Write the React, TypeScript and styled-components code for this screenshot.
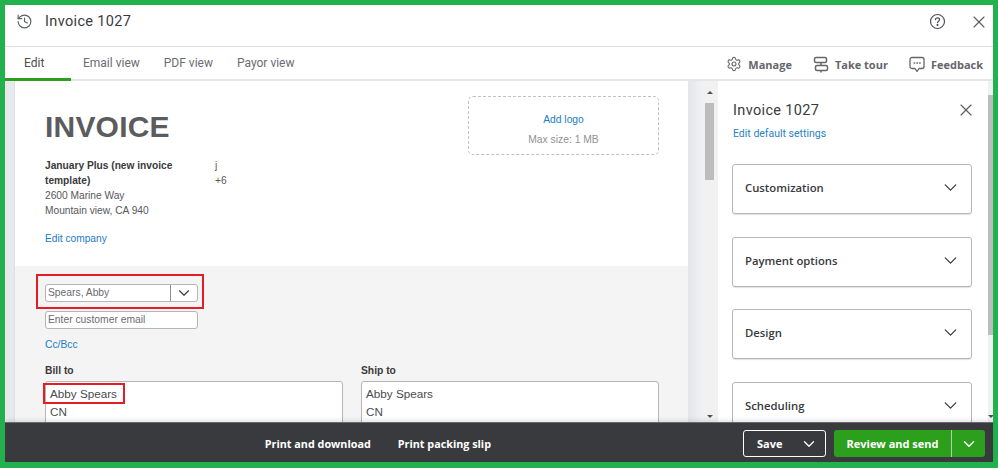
import React, { FC } from "react";
import styled, { createGlobalStyle } from "styled-components";
import { ChevronDown, Settings, X, History } from "lucide-react";

const GlobalStyle = createGlobalStyle`
  html, body {
    margin: 0;
    padding: 0;
    height: 100%;
    background: #22b14c;
    font-family: "Liberation Sans", Arial, sans-serif;
  }
  * { box-sizing: border-box; }
`;

const TABS = ["Edit", "Email view", "PDF view", "Payor view"];
const SECTIONS = ["Customization", "Payment options", "Design", "Scheduling"];

const HelpIcon: FC = () => (
  <svg width="17" height="17" viewBox="0 0 17 17" fill="none" stroke="#4f5155" strokeWidth="1.2">
    <circle cx="8.5" cy="8.5" r="7" />
    <path d="M6.4 6.7c0-1.2 1-1.9 2.1-1.9s2.1.7 2.1 1.8c0 1.6-2.1 1.6-2.1 3.1" strokeLinecap="round" />
    <circle cx="8.5" cy="12" r="0.5" fill="#4f5155" />
  </svg>
);

const TourIcon: FC = () => (
  <svg width="16" height="17" viewBox="0 0 16 17" fill="none" stroke="currentColor" strokeWidth="1.5">
    <rect x="1.5" y="1.5" width="12" height="5" rx="1.5" />
    <rect x="2.5" y="9.5" width="12" height="5" rx="1.5" />
    <path d="M8 6.5v3M8 14.5v2" />
  </svg>
);

const FeedbackIcon: FC = () => (
  <svg width="16" height="17" viewBox="0 0 16 17" fill="none" stroke="currentColor" strokeWidth="1.3">
    <path d="M3 1.5h10a2 2 0 0 1 2 2v7a2 2 0 0 1-2 2h-3l-2 3-2-3H3a2 2 0 0 1-2-2v-7a2 2 0 0 1 2-2z" strokeLinejoin="round" />
    <path d="M5 7h.6M7.8 7h.6M10.6 7h.6" strokeLinecap="round" strokeWidth="1.4" />
  </svg>
);

const App: FC = () => {
  return (
    <Frame>
      <GlobalStyle />
      <Window>
        <Header>
          <HeaderLeft>
            <History size={17} strokeWidth={1.6} color="#5d5f63" />
            <HeaderTitle>Invoice 1027</HeaderTitle>
          </HeaderLeft>
          <HeaderRight>
            <HelpIcon />
            <X size={20} strokeWidth={1.4} color="#5d5f63" />
          </HeaderRight>
        </Header>
        <TabBar>
          <Tabs>
            {TABS.map((t, i) => (
              <Tab key={t} $active={i === 0}>
                {t}
              </Tab>
            ))}
          </Tabs>
          <Tools>
            <Tool>
              <Settings size={16} strokeWidth={1.6} />
              Manage
            </Tool>
            <Tool>
              <TourIcon />
              Take tour
            </Tool>
            <Tool>
              <FeedbackIcon />
              Feedback
            </Tool>
          </Tools>
        </TabBar>
        <Body>
          <Gutter />
          <Paper>
            <CompanyBlock>
              <CompanyLeft>
                <InvoiceTitle>INVOICE</InvoiceTitle>
                <CompanyColumns>
                  <CompanyInfo>
                    <strong>January Plus (new invoice template)</strong>
                    <div>2600 Marine Way</div>
                    <div>Mountain view, CA 940</div>
                  </CompanyInfo>
                  <CompanyContact>
                    <div>j</div>
                    <div>+6</div>
                  </CompanyContact>
                </CompanyColumns>
                <EditCompany>Edit company</EditCompany>
              </CompanyLeft>
              <LogoBox>
                <LogoLink>Add logo</LogoLink>
                <LogoHint>Max size: 1 MB</LogoHint>
              </LogoBox>
            </CompanyBlock>
            <CustomerBlock>
              <CustomerHighlight>
                <CustomerSelect>
                  <CustomerValue>Spears, Abby</CustomerValue>
                  <CustomerArrow>
                    <ChevronDown size={18} strokeWidth={1.5} />
                  </CustomerArrow>
                </CustomerSelect>
              </CustomerHighlight>
              <EmailInput>Enter customer email</EmailInput>
              <CcBcc>Cc/Bcc</CcBcc>
              <Addresses>
                <Address>
                  <AddressLabel>Bill to</AddressLabel>
                  <AddressBox>
                    <NameHighlight>Abby Spears</NameHighlight>
                    <AddressLine>CN</AddressLine>
                  </AddressBox>
                </Address>
                <Address>
                  <AddressLabel>Ship to</AddressLabel>
                  <AddressBox>
                    <AddressLine>Abby Spears</AddressLine>
                    <AddressLine>CN</AddressLine>
                  </AddressBox>
                </Address>
              </Addresses>
            </CustomerBlock>
          </Paper>
          <PaperSide />
          <MainScrollbar>
            <ScrollArrow />
            <MainThumb />
            <ScrollArrow $down />
          </MainScrollbar>
          <Panel>
            <PanelHead>
              <PanelTitle>Invoice 1027</PanelTitle>
              <PanelClose>
                <X size={20} strokeWidth={1.4} color="#5d5f63" />
              </PanelClose>
            </PanelHead>
            <PanelLink>Edit default settings</PanelLink>
            <Sections>
              {SECTIONS.map((s) => (
                <Section key={s}>
                  {s}
                  <ChevronDown size={21} strokeWidth={1.5} color="#393a3d" />
                </Section>
              ))}
            </Sections>
          </Panel>
          <PanelScrollbar>
            <PanelThumb />
            <ScrollArrow $down />
          </PanelScrollbar>
        </Body>
        <Footer>
          <FooterCenter>
            <FooterAction>Print and download</FooterAction>
            <FooterAction>Print packing slip</FooterAction>
          </FooterCenter>
          <FooterButtons>
            <SaveButton>
              Save
              <ChevronDown size={18} strokeWidth={1.7} />
            </SaveButton>
            <SendButton>
              <SendLabel>Review and send</SendLabel>
              <SendArrow>
                <ChevronDown size={18} strokeWidth={2} />
              </SendArrow>
            </SendButton>
          </FooterButtons>
        </Footer>
      </Window>
    </Frame>
  );
};

const Frame = styled.div`
  width: 998px;
  height: 468px;
  padding: 5px 5px 6px 5px;
  background: #22b14c;
`;

const Window = styled.div`
  height: 100%;
  display: flex;
  flex-direction: column;
  background: #fff;
  overflow: hidden;
`;

const Header = styled.div`
  height: 42px;
  flex: none;
  display: flex;
  align-items: center;
  justify-content: space-between;
  padding: 0 4px 8px 11px;
  border-bottom: 1px solid #dcdde0;
`;

const HeaderLeft = styled.div`
  display: flex;
  align-items: center;
  gap: 12px;
`;

const HeaderTitle = styled.div`
  font-family: Roboto, sans-serif;
  font-size: 14.5px;
  letter-spacing: 0.35px;
  color: #393a3d;
`;

const HeaderRight = styled.div`
  display: flex;
  align-items: center;
  gap: 23px;
`;

const TabBar = styled.div`
  height: 34px;
  flex: none;
  display: flex;
  align-items: stretch;
  justify-content: space-between;
  padding-right: 10px;
  border-bottom: 2px solid #e3e5e8;
`;

const Tabs = styled.div`
  display: flex;
  height: 34px;
`;

const Tab = styled.div<{ $active?: boolean }>`
  font-family: Roboto, sans-serif;
  font-size: 12px;
  display: flex;
  align-items: center;
  color: ${(p) => (p.$active ? "#4a4c50" : "#6b6c72")};
  padding-left: ${(p) => (p.$active ? "19px" : "0")};
  width: ${(p) => (p.$active ? "66px" : "auto")};
  margin-right: ${(p) => (p.$active ? "12px" : "24px")};
  border-bottom: 3px solid ${(p) => (p.$active ? "#2ca01c" : "transparent")};
`;

const Tools = styled.div`
  display: flex;
  align-items: center;
  gap: 21px;
  padding-top: 2px;
`;

const Tool = styled.div`
  display: flex;
  align-items: center;
  gap: 6px;
  font-family: "Open Sans", sans-serif;
  font-size: 11px;
  font-weight: 700;
  color: #64666c;
`;

const Body = styled.div`
  flex: 1;
  min-height: 0;
  display: flex;
  background: #fff;
`;

const Gutter = styled.div`
  width: 10px;
  flex: none;
  background: #e8e9ed;
  border-right: 1px solid #dfe0e4;
`;

const Paper = styled.div`
  width: 673px;
  flex: none;
  display: flex;
  flex-direction: column;
  overflow: hidden;
  background: #fff;
`;

const CompanyBlock = styled.div`
  height: 185px;
  flex: none;
  display: flex;
  justify-content: space-between;
  padding: 15px 29px 0 30px;
`;

const CompanyLeft = styled.div`
  width: 200px;
`;

const InvoiceTitle = styled.div`
  font-size: 30px;
  font-weight: 700;
  letter-spacing: 0.2px;
  color: #5b5c5e;
  line-height: 32px;
  margin-top: 15px;
`;

const CompanyColumns = styled.div`
  display: flex;
  margin-top: 15px;
  font-size: 10.2px;
  line-height: 15px;
  color: #55575b;
`;

const CompanyInfo = styled.div`
  width: 170px;
  flex: none;
  strong {
    display: block;
    width: 140px;
    color: #393a3d;
  }
`;

const CompanyContact = styled.div``;

const EditCompany = styled.div`
  margin-top: 14px;
  font-size: 10.2px;
  line-height: 14px;
  color: #1c7cc4;
`;

const LogoBox = styled.div`
  width: 191px;
  height: 59px;
  border: 1px dashed #bfc0c3;
  border-radius: 5px;
  display: flex;
  flex-direction: column;
  align-items: center;
  justify-content: center;
  gap: 9px;
  padding-top: 8px;
  font-size: 10.3px;
`;

const LogoLink = styled.div`
  color: #1c7cc4;
`;

const LogoHint = styled.div`
  color: #909296;
`;

const CustomerBlock = styled.div`
  flex: 1;
  background: #f4f4f4;
  padding: 8px 29px 0 30px;
  overflow: hidden;
`;

const CustomerHighlight = styled.div`
  width: 168px;
  height: 35px;
  margin-left: -9px;
  padding: 8px 0 0 7px;
  border: 2px solid #e51c23;
`;

const CustomerSelect = styled.div`
  width: 153px;
  height: 18px;
  display: flex;
  background: #fff;
  border: 1px solid #b5b6b9;
  border-radius: 3px;
  font-size: 10.3px;
  color: #6b6c72;
`;

const CustomerValue = styled.div`
  flex: 1;
  padding-left: 2px;
  line-height: 16px;
`;

const CustomerArrow = styled.div`
  width: 27px;
  display: flex;
  align-items: center;
  justify-content: center;
  color: #393a3d;
  border-left: 1px solid #8d9096;
`;

const EmailInput = styled.div`
  width: 153px;
  height: 18px;
  margin-top: 2px;
  padding-left: 2px;
  background: #fff;
  border: 1px solid #b5b6b9;
  border-radius: 3px;
  font-size: 10.3px;
  line-height: 16px;
  color: #6b6c72;
`;

const CcBcc = styled.div`
  margin-top: 9px;
  font-size: 10.3px;
  line-height: 14px;
  color: #1c7cc4;
`;

const Addresses = styled.div`
  display: flex;
  gap: 18px;
  margin-top: 13px;
`;

const Address = styled.div`
  width: 298px;
`;

const AddressLabel = styled.div`
  font-size: 10.3px;
  font-weight: 700;
  line-height: 12px;
  color: #393a3d;
  margin-bottom: 4px;
`;

const AddressBox = styled.div`
  height: 60px;
  background: #fff;
  border: 1px solid #b5b6b9;
  border-radius: 3px;
  padding-top: 3px;
`;

const AddressLine = styled.div`
  padding-left: 4px;
  font-size: 11.7px;
  line-height: 18px;
  color: #4a4c50;
`;

const NameHighlight = styled.div`
  width: 82px;
  height: 21px;
  margin: -2px 0 -1px -3px;
  padding-left: 5px;
  border: 2px solid #e51c23;
  font-size: 11.7px;
  line-height: 17px;
  color: #4a4c50;
`;

const PaperSide = styled.div`
  width: 15px;
  flex: none;
  background: linear-gradient(90deg, #e4e5e8, #f2f2f4);
`;

const MainScrollbar = styled.div`
  width: 15px;
  flex: none;
  display: flex;
  flex-direction: column;
  padding: 0 4px 0 2px;
  background: #f1f1f1;
`;

const ScrollArrow = styled.div<{ $down?: boolean }>`
  height: 22px;
  flex: none;
  display: flex;
  align-items: ${(p) => (p.$down ? "flex-end" : "center")};
  justify-content: center;
  margin-top: ${(p) => (p.$down ? "auto" : "0")};
  padding-bottom: ${(p) => (p.$down ? "4px" : "0")};
  &::before {
    content: "";
    border-left: 3px solid transparent;
    border-right: 3px solid transparent;
    border-${(p) => (p.$down ? "top" : "bottom")}: 3px solid #505050;
  }
`;

const MainThumb = styled.div`
  height: 77px;
  flex: none;
  background: #bdbdbd;
`;

const PanelScrollbar = styled.div`
  width: 5px;
  flex: none;
  display: flex;
  flex-direction: column;
  padding-top: 14px;
  background: #f1f1f1;
`;

const PanelThumb = styled.div`
  height: 240px;
  flex: none;
  background: #bdbdbd;
`;

const Panel = styled.div`
  flex: 1;
  min-width: 0;
  padding: 0 16px 0 14px;
  overflow: hidden;
  display: flex;
  flex-direction: column;
`;

const PanelHead = styled.div`
  display: flex;
  align-items: center;
  justify-content: space-between;
  margin-top: 20px;
  height: 18px;
  padding-left: 1px;
`;

const PanelClose = styled.div`
  display: flex;
  margin-right: -4px;
`;

const PanelTitle = styled.div`
  font-family: Roboto, sans-serif;
  font-size: 14.5px;
  letter-spacing: 0.35px;
  color: #393a3d;
`;

const PanelLink = styled.div`
  margin-top: 8px;
  padding-left: 1px;
  font-family: Roboto, sans-serif;
  font-size: 10.5px;
  line-height: 14px;
  color: #2a84c6;
`;

const Sections = styled.div`
  display: flex;
  flex-direction: column;
  gap: 22.7px;
  margin-top: 23px;
`;

const Section = styled.div`
  height: 50px;
  flex: none;
  display: flex;
  align-items: center;
  justify-content: space-between;
  padding: 0 10px 3px 12px;
  border: 1px solid #b5b6b9;
  border-radius: 3px;
  box-shadow: 0 1px 1px rgba(0, 0, 0, 0.12);
  font-family: "Open Sans", sans-serif;
  font-size: 11.3px;
  font-weight: 600;
  color: #393a3d;
`;

const Footer = styled.div`
  height: 40px;
  flex: none;
  display: flex;
  align-items: center;
  justify-content: flex-end;
  position: relative;
  padding: 2px 8px 0 0;
  background: #393a3d;
  border-top: 1px solid #6b6c72;
  box-shadow: 0 -2px 4px rgba(0, 0, 0, 0.1);
`;

const FooterCenter = styled.div`
  margin-right: 252px;
  display: flex;
  gap: 27px;
`;

const FooterAction = styled.div`
  font-family: "Open Sans", sans-serif;
  font-size: 10.8px;
  font-weight: 700;
  color: #fff;
`;

const FooterButtons = styled.div`
  display: flex;
  align-items: center;
  gap: 8px;
`;

const SaveButton = styled.div`
  width: 83px;
  height: 27px;
  display: flex;
  align-items: center;
  justify-content: space-between;
  padding: 0 7px 0 13px;
  border: 1px solid #fff;
  border-radius: 3px;
  font-family: "Open Sans", sans-serif;
  font-size: 11px;
  font-weight: 700;
  color: #fff;
`;

const SendButton = styled.div`
  width: 151px;
  height: 27px;
  display: flex;
  background: #2ca01c;
  border-radius: 3px;
  font-family: "Open Sans", sans-serif;
  font-size: 11px;
  font-weight: 700;
  color: #fff;
`;

const SendLabel = styled.div`
  flex: 1;
  display: flex;
  align-items: center;
  justify-content: center;
  border-right: 1px solid #a6d8a0;
`;

const SendArrow = styled.div`
  width: 33px;
  display: flex;
  align-items: center;
  justify-content: center;
`;

export default App;
